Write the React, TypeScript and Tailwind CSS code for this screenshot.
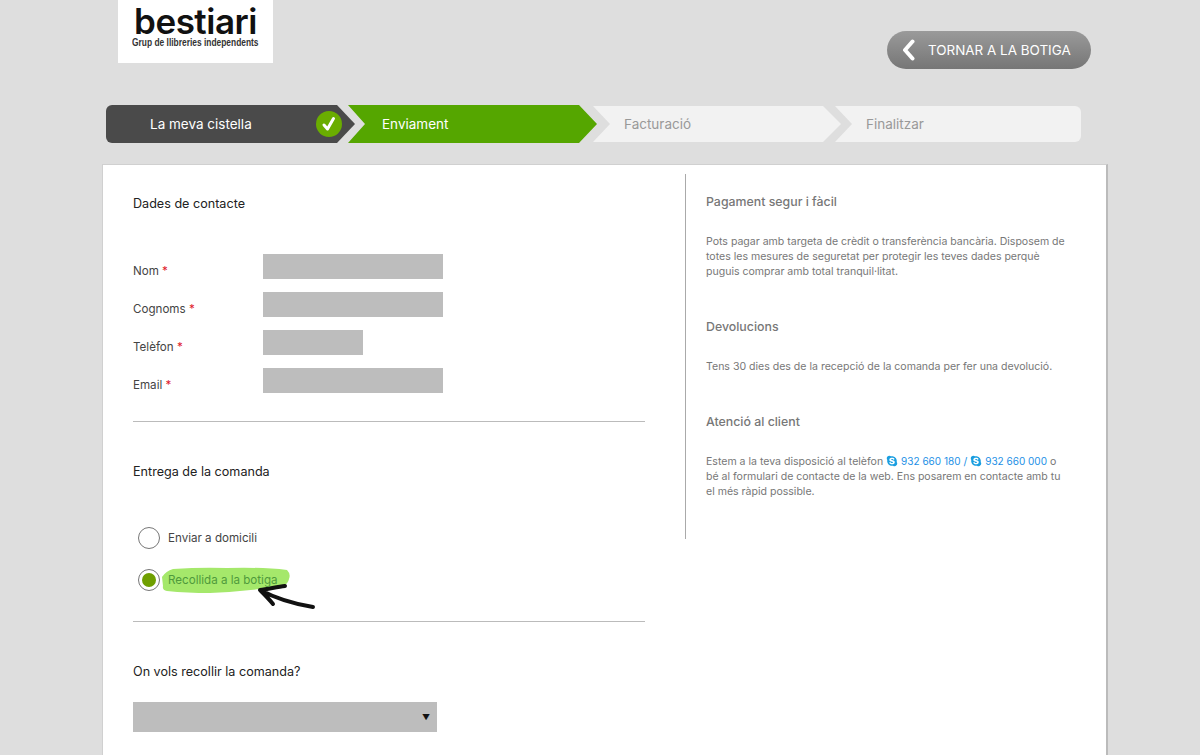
import React from 'react';
import { FaSkype } from 'react-icons/fa';

const fieldLabel = "w-[130px] pt-[10px] text-[11.6px] text-[#444]";

const Field = ({ label, width }: { label: string; width: string }) => (
  <div className="flex items-center h-[25px] mb-[13px]">
    <label className={fieldLabel}>
      {label} <span className="text-[#e0202c]">*</span>
    </label>
    <div className={`h-[25px] bg-[#bdbdbd] ${width}`} />
  </div>
);

const Phone = ({ number }: { number: string }) => (
  <span className="text-[#1c8fe6] text-[10px]">
    <FaSkype className="inline-block w-[12px] h-[12px] text-[#1a9ee0] mr-[3px] align-[-2px]" />
    {number}
  </span>
);

export default function App() {
  return (
    <div className="h-[755px] overflow-hidden bg-[#dedede] font-['Inter','Liberation_Sans',sans-serif]">
      {/* Header */}
      <header className="flex justify-between h-[105px] pl-[118px] pr-[109px]">
        <div className="w-[155px] h-[63px] bg-white overflow-hidden flex flex-col items-center">
          <div className="mt-[2px] h-[38px] text-[35px] leading-[38px] font-semibold tracking-[-0.5px] text-[#111]">
            bestiari
          </div>
          <div className="mt-[-3px] text-[10px] leading-[12px] font-bold text-[#333] whitespace-nowrap scale-x-[0.84] font-['Liberation_Sans',sans-serif]">
            Grup de llibreries independents
          </div>
        </div>
        <a className="mt-[31px] w-[204px] h-[38px] rounded-full bg-gradient-to-b from-[#9a9a9a] to-[#767676] flex items-center pl-[15px] text-white text-[13.45px]">
          <svg width="13" height="22" viewBox="0 0 13 22" className="mr-[13px]">
            <path d="M10.5 2.5 3 11l7.5 8.5" fill="none" stroke="#fff" strokeWidth="4" strokeLinecap="round" strokeLinejoin="round" />
          </svg>
          TORNAR A LA BOTIGA
        </a>
      </header>

      {/* Steps */}
      <nav className="flex items-center ml-[106px] h-[38px] text-[13.5px]">
        <div className="relative z-10 w-[249px] h-[38px] rounded-l-[6px] bg-[#4a4a4a] text-white flex items-center justify-between pl-[44px] pr-[13px] [clip-path:polygon(0_0,231px_0,100%_50%,231px_100%,0_100%)]">
          <span className="pt-[1px]">La meva cistella</span>
          <span className="w-[26px] h-[26px] rounded-full bg-[#6aad00] flex items-center justify-center">
            <svg width="16" height="16" viewBox="0 0 16 16">
              <path d="M3 9l3.5 4L12.5 2.5" fill="none" stroke="#fff" strokeWidth="3" strokeLinecap="round" strokeLinejoin="round" />
            </svg>
          </span>
        </div>
        <div className="relative z-10 ml-[-7px] w-[249px] h-[38px] bg-[#55a600] text-white flex items-center pl-[34px] pt-[1px] [clip-path:polygon(0_0,231px_0,100%_50%,231px_100%,0_100%,17px_50%)]">
          Enviament
        </div>
        <div className="ml-[-4px] w-[248px] h-[36px] bg-[#f2f2f2] text-[#999] flex items-center pl-[31px] pt-[1px] [clip-path:polygon(0_0,230px_0,100%_50%,230px_100%,0_100%,17px_50%)]">
          Facturació
        </div>
        <div className="ml-[-6px] w-[246px] h-[36px] bg-[#f2f2f2] text-[#999] rounded-r-[6px] flex items-center pl-[31px] pt-[1px] [clip-path:polygon(0_0,100%_0,100%_100%,0_100%,17px_50%)]">
          Finalitzar
        </div>
      </nav>

      {/* Card */}
      <main className="mt-[21px] ml-[102px] w-[1006px] h-[700px] bg-white border border-[#d0d0d0] border-r-2 border-r-[#bbb] flex pt-[9px] pl-[30px]">
        <section className="w-[512px]">
          <h2 className="mt-[22px] h-[16px] leading-[16px] text-[12.6px] text-[#222]">Dades de contacte</h2>
          <div className="mt-[42px]">
            <Field label="Nom" width="w-[180px]" />
            <Field label="Cognoms" width="w-[180px]" />
            <Field label="Telèfon" width="w-[100px]" />
            <Field label="Email" width="w-[180px]" />
          </div>
          <hr className="mt-[28px] border-[#bbb]" />
          <h2 className="mt-[42px] h-[16px] leading-[16px] text-[12.6px] text-[#222]">Entrega de la comanda</h2>
          <div className="mt-[47px] flex items-center h-[22px] pl-[5px] text-[11.6px] text-[#444]">
            <span className="w-[22px] h-[22px] rounded-full border border-[#777] mr-[8px]" />
            <span className="pt-[1px]">Enviar a domicili</span>
          </div>
          <div className="mt-[20px] flex items-center h-[22px] pl-[5px] text-[11.6px] text-[#4f9a3c]">
            <span className="w-[22px] h-[22px] rounded-full border border-[#777] mr-[8px] flex items-center justify-center">
              <span className="w-[14px] h-[14px] rounded-full bg-[#6f9f00]" />
            </span>
            <span className="relative pt-[1px]">
              <svg width="160" height="50" viewBox="0 0 160 50" className="absolute left-[-6px] top-[-7px] overflow-visible">
                <path d="M0 13Q4 7 11 5Q40 3 65 4Q100 3 125 6Q129 10 127 15Q126 20 121 22Q110 25 98 25Q72 28 48 29Q25 29 5 27Q0 26 1 22Z" fill="#a5e86b" />
                <path d="M98 26C106 25 115 23 123 22M98 26C102 30 107 35 111 40M98 26C113 34 132 40 151 43" fill="none" stroke="#111" strokeWidth="4" strokeLinecap="round" />
              </svg>
              <span className="relative">Recollida a la botiga</span>
            </span>
          </div>
          <hr className="mt-[30px] border-[#bbb]" />
          <h2 className="mt-[42px] h-[16px] leading-[16px] text-[12.6px] text-[#222]">On vols recollir la comanda?</h2>
          <div className="mt-[22px] w-[304px] h-[30px] bg-[#bdbdbd] flex items-center justify-end pr-[7px] text-[8px] text-[#111]">▼</div>
        </section>

        <div className="ml-[40px] w-px h-[365px] bg-[#aaa]" />

        <aside className="ml-[20px] w-[365px] text-[10.55px] leading-[15px] text-[#777]">
          <h3 className="mt-[20px] text-[12.35px] leading-[16px] font-medium text-[#777]">Pagament segur i fàcil</h3>
          <p className="mt-[24px]">
            Pots pagar amb targeta de crèdit o transferència bancària. Disposem de totes les mesures de seguretat per protegir les teves dades perquè puguis comprar amb total tranquil·litat.
          </p>
          <h3 className="mt-[40px] text-[12.35px] leading-[16px] font-medium text-[#777]">Devolucions</h3>
          <p className="mt-[24px]">Tens 30 dies des de la recepció de la comanda per fer una devolució.</p>
          <h3 className="mt-[40px] text-[12.35px] leading-[16px] font-medium text-[#777]">Atenció al client</h3>
          <p className="mt-[24px]">
            Estem a la teva disposició al telèfon <Phone number="932 660 180" /> <span className="text-[#1c8fe6]">/</span> <Phone number="932 660 000" /> o bé al formulari de contacte de la web. Ens posarem en contacte amb tu el més ràpid possible.
          </p>
        </aside>
      </main>
    </div>
  );
}
